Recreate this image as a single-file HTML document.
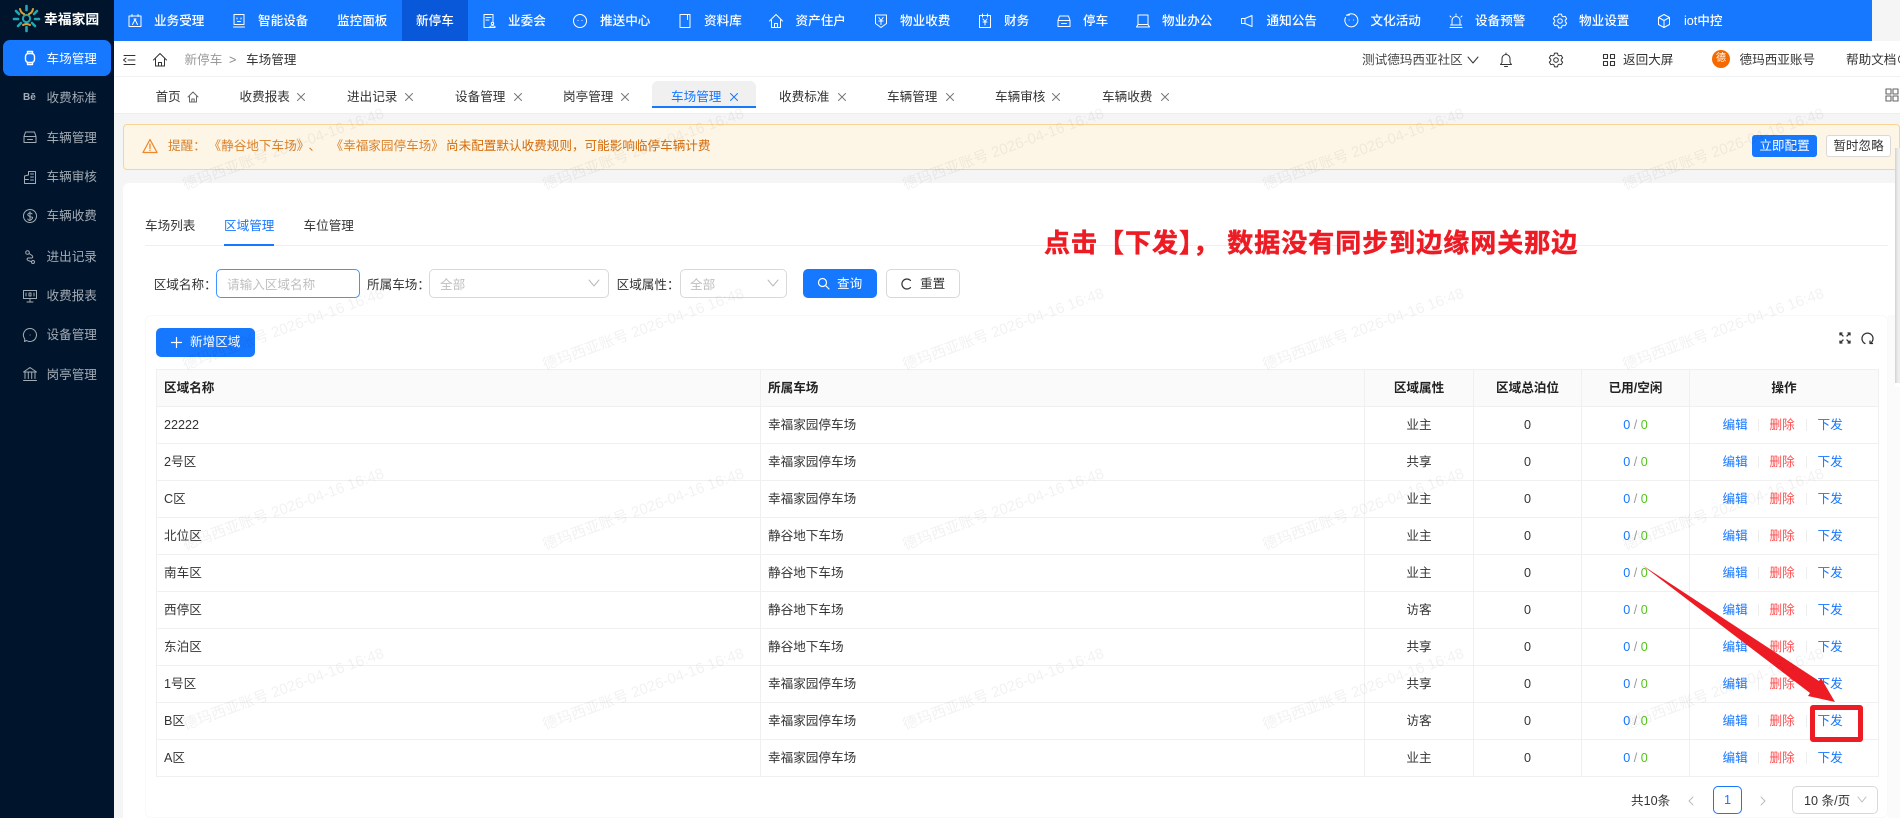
<!DOCTYPE html>
<html lang="zh">
<head>
<meta charset="utf-8">
<title>车场管理</title>
<style>
html,body{margin:0;padding:0;width:1900px;height:818px;overflow:hidden;background:#f5f5f5}
body{position:relative;font-family:"Liberation Sans","Noto Sans CJK SC",sans-serif;font-size:12.6px;color:#333}
.b{position:absolute;box-sizing:border-box}
.t{position:absolute;white-space:nowrap;line-height:20px}
.i{position:absolute;fill:none;stroke:currentColor;stroke-width:1;stroke-linecap:round;stroke-linejoin:round;overflow:visible}
.n{color:#fff;font-weight:500;line-height:42px;top:0}
.ni{color:#fff;top:13px}
.s{color:#a3abb5;left:46.5px}
.si{color:#a3abb5;left:22px}
.tb{color:#333;top:87px}
.x{color:#777;top:93px}
table{position:absolute;left:156px;top:369px;width:1722px;table-layout:fixed;border-collapse:collapse;font-size:12.6px}
td,th{height:37px;padding:0 7px;border:1px solid #f0f0f0;box-sizing:border-box;text-align:center;color:#333;overflow:hidden;line-height:20px}
th{background:#fafafa;font-weight:700;color:#222}
td.l,th.l{text-align:left}
.bl{color:#1677ff}.gr{color:#52c41a}.sl{color:#999}.re{color:#ff4d4f}
.ops{display:block;position:relative;height:20px;line-height:20px}
.ops i{position:absolute;font-style:normal;top:0;white-space:nowrap}
.ops u{position:absolute;top:4px;width:1px;height:12px;background:#eee;text-decoration:none}
</style>
</head>
<body>

<!-- sidebar -->
<div class="b" style="left:0;top:0;width:114px;height:818px;background:#00152b"></div>
<svg class="i" style="left:13px;top:5px;stroke-width:2.6" width="27" height="27" viewBox="0 0 27 27">
<circle cx="13.5" cy="13.5" r="3.6" stroke="#22a6b3" stroke-width="2"/>
<path d="M13.5 1v4M3 6l3 3M24 6l-3 3M1 14h4M26 14h-4M5 21l3-3M22 21l-3-3M13.5 26v-4" stroke="#22a6b3"/>
<path d="M7 4q1 4 4 5M20 4q-1 4-4 5M10 20q3.500-2 7 0" stroke="#e0a030" stroke-width="2"/>
</svg>
<div class="t" style="left:44px;top:10px;color:#fff;font-weight:700;font-size:13.8px">幸福家园</div>

<div class="b" style="left:3px;top:40px;width:108px;height:36px;background:#1677ff;border-radius:7px"></div>
<svg class="i" style="left:22px;top:50px;color:#fff;stroke-width:1.4" width="16" height="16" viewBox="0 0 16 16"><rect x="3.500" y="3.500" width="9" height="9" rx="3"/><path d="M5.500 3.500V1.500h5v2M5.500 12.500v2h5v-2"/></svg>
<div class="t" style="left:46.5px;top:49px;color:#fff">车场管理</div>

<div class="t" style="left:23px;top:88px;color:#a3abb5;font-size:10px;font-weight:700">Bē</div>
<div class="t s" style="top:88px">收费标准</div>
<svg class="i si" style="top:129px" width="16" height="16" viewBox="0 0 16 16"><path d="M2 13.500V7.500l1.500-4.500h9L14 7.500v6zM2 7.500h12M5.500 10.500h5"/></svg>
<div class="t s" style="top:128px">车辆管理</div>
<svg class="i si" style="top:169px" width="16" height="16" viewBox="0 0 16 16"><path d="M2.500 14.500V7l4-1V2.500h7v12zM2.500 10.500h4M8.500 5h3M8.500 8h3M8.500 11h3"/></svg>
<div class="t s" style="top:167px">车辆审核</div>
<svg class="i si" style="top:208px" width="16" height="16" viewBox="0 0 16 16"><circle cx="8" cy="8" r="6.500"/><path d="M10 5.800q-2-1.300-3.500-.3t0 2.300 3.300 1.300-.3 2.300-3.700-.3M8 3.800v8.400"/></svg>
<div class="t s" style="top:206px">车辆收费</div>
<svg class="i si" style="top:249px" width="16" height="16" viewBox="0 0 16 16"><circle cx="5.500" cy="3.500" r="1.800"/><path d="M7 4.500l3 2q1.500 1.500 0 2.500H6q-2 1 0 2.500l3 1"/><circle cx="11" cy="13" r="1.500"/></svg>
<div class="t s" style="top:247px">进出记录</div>
<svg class="i si" style="top:288px" width="16" height="16" viewBox="0 0 16 16"><rect x="1.500" y="2.500" width="13" height="8"/><path d="M8 10.500v3M5 14h6M4 8V5M7 8V5h2v3zM12 8V5"/></svg>
<div class="t s" style="top:286px">收费报表</div>
<svg class="i si" style="top:327px" width="16" height="16" viewBox="0 0 16 16"><path d="M8 1.500a6.500 6.500 0 1 1-3.500 12l-2 1 .3-2.500A6.500 6.500 0 0 1 8 1.500z"/><path d="M8 8h.1"/></svg>
<div class="t s" style="top:325px">设备管理</div>
<svg class="i si" style="top:366px" width="16" height="16" viewBox="0 0 16 16"><path d="M8 1.500L1.500 6h13zM3 6.500v6M6.300 6.500v6M9.700 6.500v6M13 6.500v6M1.500 14.500h13"/></svg>
<div class="t s" style="top:365px">岗亭管理</div>

<!-- top nav -->
<div class="b" style="left:114px;top:0;width:1758px;height:41px;background:#1677ff"></div>
<div class="b" style="left:402px;top:0;width:66px;height:41px;background:#0958d9"></div>
<svg class="i ni" style="left:127px" width="16" height="16" viewBox="0 0 16 16"><rect x="2" y="3" width="12" height="10.500"/><path d="M5 1.500v2M11 1.500v2M5.500 11.500l2.500-5 2.500 5M7 6h2"/></svg>
<div class="t n" style="left:154px">业务受理</div>
<svg class="i ni" style="left:231px" width="16" height="16" viewBox="0 0 16 16"><rect x="3" y="1.500" width="10" height="10"/><path d="M6 5v1M10 5v1M6.500 8.500h3M2.500 14h11"/></svg>
<div class="t n" style="left:258px">智能设备</div>
<div class="t n" style="left:337px">监控面板</div>
<div class="t n" style="left:416px">新停车</div>
<svg class="i ni" style="left:481px" width="16" height="16" viewBox="0 0 16 16"><path d="M10 14.500H3V1.500h9v7M5 4.500h5M5 7h3"/><circle cx="11.500" cy="10.500" r="1.200"/><path d="M9 14.500v-1q2.500-1.500 5 0v1z"/></svg>
<div class="t n" style="left:508px">业委会</div>
<svg class="i ni" style="left:572px" width="16" height="16" viewBox="0 0 16 16"><path d="M8 1.500a6.500 6.500 0 1 1 0 13 6.500 6.500 0 0 1 0-13zM6 7.500h.1M10 7.500h.1"/></svg>
<div class="t n" style="left:600px">推送中心</div>
<svg class="i ni" style="left:677px" width="16" height="16" viewBox="0 0 16 16"><rect x="3" y="1.500" width="10" height="13"/><path d="M10.500 1.500v5"/></svg>
<div class="t n" style="left:704px">资料库</div>
<svg class="i ni" style="left:768px" width="16" height="16" viewBox="0 0 16 16"><path d="M1.500 8L8 1.500 14.500 8M3.500 7v7.500h9V7M6.500 14.500v-4h3v4"/></svg>
<div class="t n" style="left:795.500px">资产住户</div>
<svg class="i ni" style="left:873px" width="16" height="16" viewBox="0 0 16 16"><path d="M2.500 2h11v8.500L8 14.500l-5.500-4zM5.800 4.500L8 7.500l2.200-3M5.800 8h4.400M8 7.500v4"/></svg>
<div class="t n" style="left:900px">物业收费</div>
<svg class="i ni" style="left:977px" width="16" height="16" viewBox="0 0 16 16"><rect x="2.500" y="2.500" width="11" height="12"/><path d="M5.500 1v3M10.500 1v3M6 6l2 2.500L10 6M6 9h4M8 8.500V12"/></svg>
<div class="t n" style="left:1004px">财务</div>
<svg class="i ni" style="left:1056px" width="16" height="16" viewBox="0 0 16 16"><path d="M2 13.500V7.500l1.500-4.500h9L14 7.500v6zM2 7.500h12M5.500 10.500h5"/></svg>
<div class="t n" style="left:1083px">停车</div>
<svg class="i ni" style="left:1135px" width="16" height="16" viewBox="0 0 16 16"><rect x="3" y="2" width="10" height="9.500"/><path d="M1.500 14h13M1.500 14l1.500-2.500M14.500 14L13 11.500"/></svg>
<div class="t n" style="left:1162px">物业办公</div>
<svg class="i ni" style="left:1239px" width="16" height="16" viewBox="0 0 16 16"><path d="M13 2.500v11L6 10.500H2.500v-5H6zM6 5.500v5"/></svg>
<div class="t n" style="left:1266.500px">通知公告</div>
<svg class="i ni" style="left:1343px" width="16" height="16" viewBox="0 0 16 16"><path d="M4 2.500a6.500 6.500 0 1 1-1.500 2M6 7h.1M10.500 7h.1"/><path d="M3.500 2h3"/></svg>
<div class="t n" style="left:1370.500px">文化活动</div>
<svg class="i ni" style="left:1448px" width="16" height="16" viewBox="0 0 16 16"><path d="M4 12V7.500a4 4 0 0 1 8 0V12M2 14.500h12M2.500 12h11M8 1v1.200M2 3l1 1M14 3l-1 1"/></svg>
<div class="t n" style="left:1475px">设备预警</div>
<svg class="i ni" style="left:1552px" width="16" height="16" viewBox="0 0 16 16"><path d="M6.010 3.090L6.540 1.150H9.460L9.990 3.090L11.260 3.820L13.200 3.320L14.660 5.840L13.250 7.260V8.740L14.660 10.160L13.200 12.680L11.260 12.180L9.990 12.910L9.460 14.850H6.540L6.010 12.910L4.740 12.180L2.800 12.680L1.340 10.160L2.750 8.740V7.260L1.340 5.840L2.800 3.320L4.740 3.820z"/><circle cx="8" cy="8" r="2.300"/></svg>
<div class="t n" style="left:1579px">物业设置</div>
<svg class="i ni" style="left:1656px" width="16" height="16" viewBox="0 0 16 16"><path d="M8 1.500l5.500 3v7L8 14.500l-5.500-3v-7zM2.500 4.500L8 7.500l5.500-3M8 7.500v7"/></svg>
<div class="t n" style="left:1684px">iot中控</div>

<!-- breadcrumb row -->
<div class="b" style="left:114px;top:41px;width:1786px;height:35px;background:#fff"></div>
<svg class="i" style="left:121px;top:52px;color:#333" width="16" height="16" viewBox="0 0 16 16"><path d="M3 3.500h11M7 8h7M3 12.500h11M5 6L2.500 8 5 10"/></svg>
<svg class="i" style="left:152px;top:52px;color:#333" width="16" height="16" viewBox="0 0 16 16"><path d="M1.500 8L8 1.500 14.500 8M3.500 7v7h9V7M6.500 14v-3.500h3V14"/></svg>
<div class="t" style="left:184.500px;top:50px;color:#999">新停车</div>
<div class="t" style="left:229px;top:50px;color:#888">&gt;</div>
<div class="t" style="left:246px;top:50px;color:#333">车场管理</div>

<div class="t" style="left:1362px;top:50px;color:#444">测试德玛西亚社区</div>
<svg class="i" style="left:1465px;top:52px;color:#333" width="16" height="16" viewBox="0 0 16 16"><path d="M3 5l5 6 5-6"/></svg>
<svg class="i" style="left:1498px;top:52px;color:#333" width="16" height="16" viewBox="0 0 16 16"><path d="M2.500 12.500h11l-1.500-2V6.500a4 4 0 0 0-8 0v4zM8 1v1.500M6.500 14.500h3"/></svg>
<svg class="i" style="left:1548px;top:52px;color:#333" width="16" height="16" viewBox="0 0 16 16"><path d="M6.010 3.090L6.540 1.150H9.460L9.990 3.090L11.260 3.820L13.200 3.320L14.660 5.840L13.250 7.260V8.740L14.660 10.160L13.200 12.680L11.260 12.180L9.990 12.910L9.460 14.850H6.540L6.010 12.910L4.740 12.180L2.800 12.680L1.340 10.160L2.750 8.740V7.260L1.340 5.840L2.800 3.320L4.740 3.820z"/><circle cx="8" cy="8" r="2.300"/></svg>
<svg class="i" style="left:1601px;top:52px;color:#333;stroke-width:1.100" width="16" height="16" viewBox="0 0 16 16"><rect x="2.500" y="2.500" width="4" height="4"/><rect x="9.500" y="2.500" width="4" height="4"/><rect x="2.500" y="9.500" width="4" height="4"/><rect x="9.500" y="9.500" width="4" height="4"/></svg>
<div class="t" style="left:1623px;top:50px;color:#333">返回大屏</div>
<div class="b" style="left:1712px;top:50px;width:18px;height:18px;border-radius:50%;background:#f56a00;color:#fff;font-size:10px;line-height:18px;text-align:center">德</div>
<div class="t" style="left:1739.500px;top:50px;color:#333">德玛西亚账号</div>
<div class="t" style="left:1846px;top:50px;color:#333">帮助文档⊙</div>

<!-- tabs row -->
<div class="b" style="left:114px;top:76px;width:1786px;height:38px;background:#fff;border-top:1px solid #f2f2f2;border-bottom:1px solid #eee"></div>
<div class="b" style="left:652px;top:81px;width:104px;height:25px;background:#f0f0f0;border-radius:6px 6px 0 0"></div>
<div class="b" style="left:652px;top:106px;width:104px;height:2px;background:#1677ff"></div>
<div class="t tb" style="left:155.500px">首页</div>
<svg class="i" style="left:187px;top:91px;color:#666" width="12" height="12" viewBox="0 0 12 12"><path d="M1 6l5-5 5 5M2.500 5.500V11h7V5.500M4.800 11V8h2.400v3"/></svg>
<div class="t tb" style="left:239.500px">收费报表</div>
<svg class="i x" style="left:297px" width="8" height="8" viewBox="0 0 8 8"><path d="M.5.500l7 7M7.500.500l-7 7"/></svg>
<div class="t tb" style="left:347px">进出记录</div>
<svg class="i x" style="left:405px" width="8" height="8" viewBox="0 0 8 8"><path d="M.5.500l7 7M7.500.500l-7 7"/></svg>
<div class="t tb" style="left:455px">设备管理</div>
<svg class="i x" style="left:513.500px" width="8" height="8" viewBox="0 0 8 8"><path d="M.5.500l7 7M7.500.500l-7 7"/></svg>
<div class="t tb" style="left:563px">岗亭管理</div>
<svg class="i x" style="left:621px" width="8" height="8" viewBox="0 0 8 8"><path d="M.5.500l7 7M7.500.500l-7 7"/></svg>
<div class="t tb" style="left:671px;color:#1677ff">车场管理</div>
<svg class="i x" style="left:729.500px;color:#1677ff" width="8" height="8" viewBox="0 0 8 8"><path d="M.5.500l7 7M7.500.500l-7 7"/></svg>
<div class="t tb" style="left:779px">收费标准</div>
<svg class="i x" style="left:837.500px" width="8" height="8" viewBox="0 0 8 8"><path d="M.5.500l7 7M7.500.500l-7 7"/></svg>
<div class="t tb" style="left:887px">车辆管理</div>
<svg class="i x" style="left:945.500px" width="8" height="8" viewBox="0 0 8 8"><path d="M.5.500l7 7M7.500.500l-7 7"/></svg>
<div class="t tb" style="left:995px">车辆审核</div>
<svg class="i x" style="left:1052px" width="8" height="8" viewBox="0 0 8 8"><path d="M.5.500l7 7M7.500.500l-7 7"/></svg>
<div class="t tb" style="left:1102px">车辆收费</div>
<svg class="i x" style="left:1160.500px" width="8" height="8" viewBox="0 0 8 8"><path d="M.5.500l7 7M7.500.500l-7 7"/></svg>
<svg class="i" style="left:1885px;top:88px;color:#666;stroke-width:1.100" width="14" height="14" viewBox="0 0 14 14"><rect x="1" y="1" width="5" height="5"/><rect x="8" y="1" width="5" height="5"/><rect x="1" y="8" width="5" height="5"/><rect x="8" y="8" width="5" height="5"/></svg>

<!-- alert -->
<div class="b" style="left:123px;top:124px;width:1777px;height:46px;background:#fdf5e6;border:1px solid #fdd391;border-radius:4px"></div>
<svg class="i" style="left:142px;top:138px;color:#f0882a;stroke-width:1.300" width="16" height="16" viewBox="0 0 16 16"><path d="M8 1.500L15 14.500H1zM8 6v4.500M8 12.300v.2"/></svg>
<div class="t" style="left:168px;top:136px;color:#d9822b">提醒：</div>
<div class="t" style="left:208.500px;top:136px;color:#d9822b">《静谷地下车场》</div>
<div class="t" style="left:308.500px;top:136px;color:#d9822b">、</div>
<div class="t" style="left:330.500px;top:136px;color:#d9822b">《幸福家园停车场》</div>
<div class="t" style="left:446px;top:136px;color:#d46b08">尚未配置默认收费规则，可能影响临停车辆计费</div>
<div class="b" style="left:1752px;top:135px;width:65px;height:22px;background:#1677ff;border-radius:3px;color:#fff;text-align:center;line-height:22px">立即配置</div>
<div class="b" style="left:1826px;top:135px;width:65px;height:22px;background:#fff;border:1px solid #d9d9d9;border-radius:3px;color:#333;text-align:center;line-height:20px">暂时忽略</div>

<!-- card -->
<div class="b" style="left:123px;top:183px;width:1777px;height:635px;background:#fff;border-radius:6px 0 0 0"></div>
<div class="b" style="left:145px;top:315px;width:1743px;height:503px;border:1px solid #f9f9f9;border-radius:6px"></div>
<div class="b" style="left:1888px;top:315px;width:12px;height:503px;background:#fbfbfb"></div>

<div class="t" style="left:145px;top:216px">车场列表</div>
<div class="t" style="left:224px;top:216px;color:#1677ff">区域管理</div>
<div class="t" style="left:303.500px;top:216px">车位管理</div>
<div class="b" style="left:145px;top:245px;width:1743px;height:1px;background:#efefef"></div>
<div class="b" style="left:224px;top:244px;width:50px;height:2px;background:#1677ff"></div>

<div class="t" style="left:1044px;top:228px;line-height:30px;color:#ed1c24;font-size:26px;font-weight:700;letter-spacing:1px;word-spacing:-1px;-webkit-text-stroke:.5px #ed1c24">点击【下发】， 数据没有同步到边缘网关那边</div>

<!-- filters -->
<div class="t" style="left:153.700px;top:275px">区域名称：</div>
<div class="b" style="left:216px;top:269px;width:144px;height:29px;border:1px solid #4096ff;border-radius:5px"></div>
<div class="t" style="left:227px;top:275px;color:#bfbfbf">请输入区域名称</div>
<div class="t" style="left:367px;top:275px">所属车场：</div>
<div class="b" style="left:429px;top:269px;width:180px;height:29px;border:1px solid #d9d9d9;border-radius:5px"></div>
<div class="t" style="left:440px;top:275px;color:#bfbfbf">全部</div>
<svg class="i" style="left:588px;top:279px;color:#bbb" width="12" height="8" viewBox="0 0 12 8"><path d="M1 1l5 6 5-6"/></svg>
<div class="t" style="left:616.600px;top:275px">区域属性：</div>
<div class="b" style="left:680px;top:269px;width:107px;height:29px;border:1px solid #d9d9d9;border-radius:5px"></div>
<div class="t" style="left:690px;top:275px;color:#bfbfbf">全部</div>
<svg class="i" style="left:767px;top:279px;color:#bbb" width="12" height="8" viewBox="0 0 12 8"><path d="M1 1l5 6 5-6"/></svg>
<div class="b" style="left:803px;top:269px;width:74px;height:29px;background:#1677ff;border-radius:5px"></div>
<svg class="i" style="left:817px;top:277px;color:#fff;stroke-width:1.200" width="13" height="13" viewBox="0 0 13 13"><circle cx="5.500" cy="5.500" r="4"/><path d="M8.500 8.500l3.500 3.500"/></svg>
<div class="t" style="left:837px;top:274px;color:#fff">查询</div>
<div class="b" style="left:886px;top:269px;width:74px;height:29px;background:#fff;border:1px solid #d9d9d9;border-radius:5px"></div>
<svg class="i" style="left:900px;top:278px;color:#333;stroke-width:1.200" width="12" height="12" viewBox="0 0 12 12"><path d="M10.500 2.500A5 5 0 1 0 10.500 9.500"/></svg>
<div class="t" style="left:920px;top:274px">重置</div>

<!-- add button -->
<div class="b" style="left:156px;top:328px;width:99px;height:29px;background:#1677ff;border-radius:5px"></div>
<svg class="i" style="left:171px;top:337px;color:#fff;stroke-width:1.200" width="11" height="11" viewBox="0 0 11 11"><path d="M5.500.500v10M.5 5.500h10"/></svg>
<div class="t" style="left:190px;top:332px;color:#fff">新增区域</div>
<svg class="i" style="left:1839px;top:332px;color:#333;stroke-width:1.300" width="12" height="12" viewBox="0 0 12 12"><path d="M1 1l3 3M11 1L8 4M1 11l3-3M11 11L8 8M1 1h2M1 1v2M11 1H9M11 1v2M1 11h2M1 11V9M11 11H9M11 11V9"/></svg>
<svg class="i" style="left:1861px;top:332px;color:#333;stroke-width:1.300" width="13" height="13" viewBox="0 0 13 13"><path d="M4 11.500A5.500 5.500 0 1 1 9 11.500M9 9v2.500h2.500"/></svg>

<!-- table -->
<table>
<colgroup><col style="width:604px"><col style="width:604px"><col style="width:109px"><col style="width:108px"><col style="width:108px"><col style="width:189px"></colgroup>
<tr><th class="l">区域名称</th><th class="l">所属车场</th><th>区域属性</th><th>区域总泊位</th><th>已用/空闲</th><th>操作</th></tr>
<tr><td class="l">22222</td><td class="l">幸福家园停车场</td><td>业主</td><td>0</td><td><span class="bl">0</span> <span class="sl">/</span> <span class="gr">0</span></td><td><span class="ops"><i class="bl" style="left:25.500px">编辑</i><u style="left:61px"></u><i class="re" style="left:72.500px">删除</i><u style="left:109px"></u><i class="bl" style="left:120.500px">下发</i></span></td></tr>
<tr><td class="l">2号区</td><td class="l">幸福家园停车场</td><td>共享</td><td>0</td><td><span class="bl">0</span> <span class="sl">/</span> <span class="gr">0</span></td><td><span class="ops"><i class="bl" style="left:25.500px">编辑</i><u style="left:61px"></u><i class="re" style="left:72.500px">删除</i><u style="left:109px"></u><i class="bl" style="left:120.500px">下发</i></span></td></tr>
<tr><td class="l">C区</td><td class="l">幸福家园停车场</td><td>业主</td><td>0</td><td><span class="bl">0</span> <span class="sl">/</span> <span class="gr">0</span></td><td><span class="ops"><i class="bl" style="left:25.500px">编辑</i><u style="left:61px"></u><i class="re" style="left:72.500px">删除</i><u style="left:109px"></u><i class="bl" style="left:120.500px">下发</i></span></td></tr>
<tr><td class="l">北位区</td><td class="l">静谷地下车场</td><td>业主</td><td>0</td><td><span class="bl">0</span> <span class="sl">/</span> <span class="gr">0</span></td><td><span class="ops"><i class="bl" style="left:25.500px">编辑</i><u style="left:61px"></u><i class="re" style="left:72.500px">删除</i><u style="left:109px"></u><i class="bl" style="left:120.500px">下发</i></span></td></tr>
<tr><td class="l">南车区</td><td class="l">静谷地下车场</td><td>业主</td><td>0</td><td><span class="bl">0</span> <span class="sl">/</span> <span class="gr">0</span></td><td><span class="ops"><i class="bl" style="left:25.500px">编辑</i><u style="left:61px"></u><i class="re" style="left:72.500px">删除</i><u style="left:109px"></u><i class="bl" style="left:120.500px">下发</i></span></td></tr>
<tr><td class="l">西停区</td><td class="l">静谷地下车场</td><td>访客</td><td>0</td><td><span class="bl">0</span> <span class="sl">/</span> <span class="gr">0</span></td><td><span class="ops"><i class="bl" style="left:25.500px">编辑</i><u style="left:61px"></u><i class="re" style="left:72.500px">删除</i><u style="left:109px"></u><i class="bl" style="left:120.500px">下发</i></span></td></tr>
<tr><td class="l">东泊区</td><td class="l">静谷地下车场</td><td>共享</td><td>0</td><td><span class="bl">0</span> <span class="sl">/</span> <span class="gr">0</span></td><td><span class="ops"><i class="bl" style="left:25.500px">编辑</i><u style="left:61px"></u><i class="re" style="left:72.500px">删除</i><u style="left:109px"></u><i class="bl" style="left:120.500px">下发</i></span></td></tr>
<tr><td class="l">1号区</td><td class="l">幸福家园停车场</td><td>共享</td><td>0</td><td><span class="bl">0</span> <span class="sl">/</span> <span class="gr">0</span></td><td><span class="ops"><i class="bl" style="left:25.500px">编辑</i><u style="left:61px"></u><i class="re" style="left:72.500px">删除</i><u style="left:109px"></u><i class="bl" style="left:120.500px">下发</i></span></td></tr>
<tr><td class="l">B区</td><td class="l">幸福家园停车场</td><td>访客</td><td>0</td><td><span class="bl">0</span> <span class="sl">/</span> <span class="gr">0</span></td><td><span class="ops"><i class="bl" style="left:25.500px">编辑</i><u style="left:61px"></u><i class="re" style="left:72.500px">删除</i><u style="left:109px"></u><i class="bl" style="left:120.500px">下发</i></span></td></tr>
<tr><td class="l">A区</td><td class="l">幸福家园停车场</td><td>业主</td><td>0</td><td><span class="bl">0</span> <span class="sl">/</span> <span class="gr">0</span></td><td><span class="ops"><i class="bl" style="left:25.500px">编辑</i><u style="left:61px"></u><i class="re" style="left:72.500px">删除</i><u style="left:109px"></u><i class="bl" style="left:120.500px">下发</i></span></td></tr>
</table>

<!-- pagination -->
<div class="t" style="left:1631px;top:791px">共10条</div>
<svg class="i" style="left:1688px;top:796px;color:#bbb" width="6" height="10" viewBox="0 0 6 10"><path d="M5 1L1 5l4 4"/></svg>
<div class="b" style="left:1713px;top:786px;width:29px;height:28px;border:1px solid #1677ff;border-radius:5px;color:#1677ff;text-align:center;line-height:26px;font-weight:500">1</div>
<svg class="i" style="left:1760px;top:796px;color:#bbb" width="6" height="10" viewBox="0 0 6 10"><path d="M1 1l4 4-4 4"/></svg>
<div class="b" style="left:1791.500px;top:786px;width:86px;height:28px;border:1px solid #d9d9d9;border-radius:5px"></div>
<div class="t" style="left:1804px;top:791px">10 条/页</div>
<svg class="i" style="left:1857px;top:796px;color:#bbb" width="10" height="7" viewBox="0 0 10 7"><path d="M1 1l4 5 4-5"/></svg>

<!-- popup edge -->
<div class="b" style="left:1895px;top:148px;width:5px;height:239px;background:linear-gradient(90deg,#d2d2d2,#ededed 60%);border-bottom:4px solid #fff"></div>

<!-- annotations -->
<svg style="position:absolute;left:0;top:0" width="1900" height="818">
<polygon points="1642,565 1819,681 1821,678 1835,702 1808,696 1810,693" fill="#ed1c24"/>
</svg>
<div class="b" style="left:1810px;top:705px;width:53px;height:37px;border:5.500px solid #ed1c24;border-radius:3px"></div>

<!-- watermark -->
<svg style="position:absolute;left:114px;top:41px;pointer-events:none" width="1786" height="777" viewBox="114 41 1786 777">
<g fill="rgba(0,0,0,.055)" font-size="15" font-family="'Liberation Sans','Noto Sans CJK SC',sans-serif">
<text transform="translate(185 190) rotate(-20)">德玛西亚账号 2026-04-16 16:48</text>
<text transform="translate(545 190) rotate(-20)">德玛西亚账号 2026-04-16 16:48</text>
<text transform="translate(905 190) rotate(-20)">德玛西亚账号 2026-04-16 16:48</text>
<text transform="translate(1265 190) rotate(-20)">德玛西亚账号 2026-04-16 16:48</text>
<text transform="translate(1625 190) rotate(-20)">德玛西亚账号 2026-04-16 16:48</text>
<text transform="translate(185 370) rotate(-20)">德玛西亚账号 2026-04-16 16:48</text>
<text transform="translate(545 370) rotate(-20)">德玛西亚账号 2026-04-16 16:48</text>
<text transform="translate(905 370) rotate(-20)">德玛西亚账号 2026-04-16 16:48</text>
<text transform="translate(1265 370) rotate(-20)">德玛西亚账号 2026-04-16 16:48</text>
<text transform="translate(1625 370) rotate(-20)">德玛西亚账号 2026-04-16 16:48</text>
<text transform="translate(185 550) rotate(-20)">德玛西亚账号 2026-04-16 16:48</text>
<text transform="translate(545 550) rotate(-20)">德玛西亚账号 2026-04-16 16:48</text>
<text transform="translate(905 550) rotate(-20)">德玛西亚账号 2026-04-16 16:48</text>
<text transform="translate(1265 550) rotate(-20)">德玛西亚账号 2026-04-16 16:48</text>
<text transform="translate(1625 550) rotate(-20)">德玛西亚账号 2026-04-16 16:48</text>
<text transform="translate(185 730) rotate(-20)">德玛西亚账号 2026-04-16 16:48</text>
<text transform="translate(545 730) rotate(-20)">德玛西亚账号 2026-04-16 16:48</text>
<text transform="translate(905 730) rotate(-20)">德玛西亚账号 2026-04-16 16:48</text>
<text transform="translate(1265 730) rotate(-20)">德玛西亚账号 2026-04-16 16:48</text>
<text transform="translate(1625 730) rotate(-20)">德玛西亚账号 2026-04-16 16:48</text>
</g>
</svg>
</body>
</html>
